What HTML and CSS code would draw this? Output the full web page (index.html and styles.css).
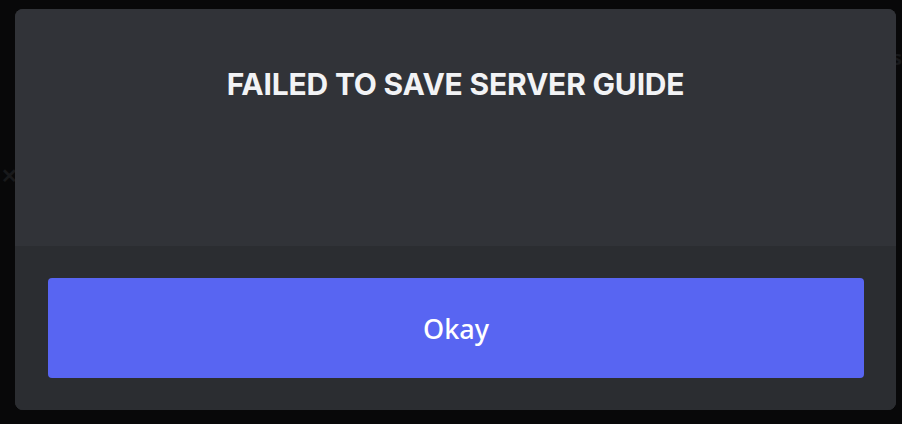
FILE: index.html
```html
<!DOCTYPE html>
<html lang="en">
<head>
<meta charset="utf-8">
<title>Failed to save server guide</title>
<link rel="stylesheet" href="styles.css">
</head>
<body>
<div class="backdrop">
  <span class="ghost ghost-x">✕</span>
  <span class="ghost ghost-s">s</span>
  <div class="modal" role="dialog">
    <div class="modal-header">
      <h1 class="modal-title">FAILED TO SAVE SERVER GUIDE</h1>
    </div>
    <div class="modal-footer">
      <button class="btn-primary" type="button">Okay</button>
    </div>
  </div>
</div>
</body>
</html>
```
FILE: styles.css
```css
* { box-sizing: border-box; }
html, body {
  margin: 0;
  padding: 0;
  width: 902px;
  height: 424px;
  background: #080809;
  overflow: hidden;
}
.backdrop {
  position: relative;
  width: 902px;
  height: 424px;
  padding: 9px 6px 14px 15px;
  font-family: "Noto Sans", "Open Sans", sans-serif;
}
.ghost {
  position: absolute;
  color: #18191b;
  font-weight: 700;
}
.ghost-x { left: 1px; top: 162px; font-size: 20px; }
.ghost-s { right: 0; top: 44px; font-size: 20px; }
.modal {
  position: relative;
  width: 881px;
  height: 401px;
  border-radius: 8px;
  overflow: hidden;
  display: flex;
  flex-direction: column;
  background: #313338;
}
.modal-header {
  height: 237px;
  background: #313338;
  display: flex;
  justify-content: center;
  padding-top: 55px;
}
.modal-title {
  margin: 0;
  color: #f2f3f5;
  font-family: Inter, "Noto Sans", sans-serif;
  font-size: 30px;
  line-height: 40px;
  font-weight: 700;
  letter-spacing: -0.2px;
}
.modal-footer {
  flex: 1;
  background: #2b2d31;
  padding: 32px 32px 32px 33px;
  display: flex;
}
.btn-primary {
  flex: 1;
  border: 0;
  border-radius: 4px;
  background: #5865f2;
  color: #ffffff;
  font-family: "Noto Sans", "Open Sans", sans-serif;
  font-size: 27px;
  font-weight: 500;
  cursor: pointer;
}
```
